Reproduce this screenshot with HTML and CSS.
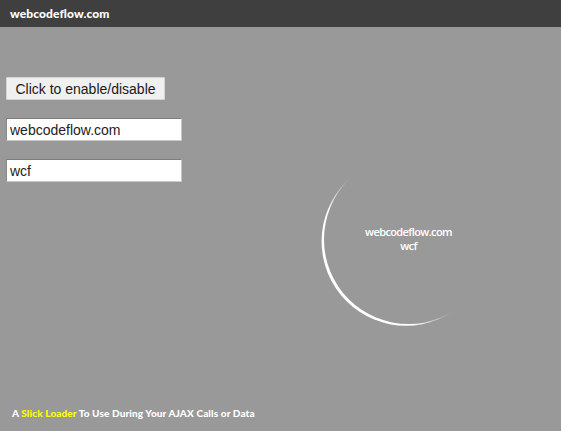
FILE: index.html
```html
<!DOCTYPE html>
<html>
<head>
<meta charset="utf-8">
<link rel="stylesheet" href="styles.css">
</head>
<body>
<div class="page">
  <header class="topbar">webcodeflow.com</header>
  <main class="content">
    <button class="toggle" type="button">Click to enable/disable</button>
    <input class="field" type="text" value="webcodeflow.com">
    <input class="field" type="text" value="wcf">
  </main>
  <footer class="credit">A <span class="hl">Slick Loader</span> To Use During Your AJAX Calls or Data</footer>
  <div class="loader">
    <div class="ring-wrap"><div class="ring"></div></div>
    <div class="loader-text">webcodeflow.com<br>wcf</div>
  </div>
</div>
</body>
</html>
```
FILE: styles.css
```css
html, body {
  margin: 0;
  padding: 0;
  height: 100%;
}
body {
  background: #999999;
  font-family: "Liberation Sans", Arial, sans-serif;
  overflow: hidden;
}
.page {
  position: relative;
  height: 100%;
  display: flex;
  flex-direction: column;
}
.topbar {
  height: 27px;
  background: #3f3f3f;
  color: #fff;
  font-family: "Lato", "Open Sans", sans-serif;
  font-weight: 900;
  font-size: 12px;
  line-height: 27px;
  padding-left: 10px;
  letter-spacing: 0.1px;
}
.content {
  flex: 1;
  display: flex;
  flex-direction: column;
  align-items: flex-start;
  gap: 18px;
  padding: 50px 0 0 6px;
}
.toggle {
  box-sizing: border-box;
  height: 23px;
  width: 159px;
  padding: 0;
  margin: 0;
  font-family: "Liberation Sans", Arial, sans-serif;
  font-size: 14px;
  color: #1a1a1a;
  background: #f0f0f0;
  border: 1px solid #d4d4d4;
  border-radius: 1px;
}
.field {
  box-sizing: border-box;
  height: 23px;
  width: 176px;
  margin: 0;
  padding: 0 3px;
  font-family: "Liberation Sans", Arial, sans-serif;
  font-size: 14px;
  color: #222;
  background: #fff;
  border: 1px solid #c8c8c8;
  border-top-color: #7d7d7d;
  border-left-color: #8a8a8a;
  border-radius: 0;
}
.credit {
  padding: 0 0 12px 12px;
  color: #fff;
  font-family: "Lato", "Open Sans", sans-serif;
  font-weight: 900;
  font-size: 10px;
  letter-spacing: 0.12px;
}
.hl {
  color: #ffff00;
}
.loader {
  position: absolute;
  left: 318px;
  top: 149px;
  width: 181px;
  height: 181px;
}
.ring-wrap {
  box-sizing: border-box;
  width: 100%;
  height: 100%;
  padding: 6px;
  -webkit-mask-image: conic-gradient(transparent 0deg, transparent 146deg, #000 178deg, #000 288deg, transparent 318deg, transparent 360deg);
  mask-image: conic-gradient(transparent 0deg, transparent 146deg, #000 178deg, #000 288deg, transparent 318deg, transparent 360deg);
}
.ring {
  width: 100%;
  height: 100%;
  border-radius: 50%;
  box-shadow: -2.4px 1.8px 0.4px #ffffff;
}
.loader-text {
  position: absolute;
  inset: 0;
  display: flex;
  align-items: center;
  justify-content: center;
  padding-bottom: 2px;
  text-align: center;
  color: #fff;
  font-family: "Open Sans", sans-serif;
  font-weight: 600;
  font-size: 11px;
  line-height: 14px;
  letter-spacing: -0.6px;
}
```
